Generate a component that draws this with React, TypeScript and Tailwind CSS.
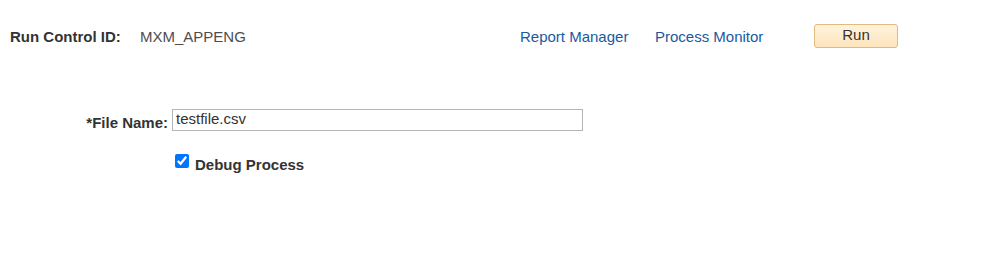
const font = 'font-["Liberation_Sans",Arial,sans-serif]';

export default function App() {
  return (
    <div className={`w-[988px] h-[258px] overflow-hidden bg-white pt-[24px] ${font} text-[15px] text-[#333333]`}>
      <div className="flex items-center h-[24px] pl-[10px]">
        <div className="w-[130px] font-bold pt-[2px]">Run Control ID:</div>
        <div className="w-[380px] pt-[2px] text-[#4d4d4d]">MXM_APPENG</div>
        <a href="#" className="w-[135px] pt-[2px] text-[#1a5a9e]">Report Manager</a>
        <a href="#" className="w-[159px] pt-[2px] text-[#1a5a9e]">Process Monitor</a>
        <button className="w-[84px] h-[24px] pb-[3px] rounded-[3px] border border-[#e3b883] bg-gradient-to-b from-[#fff3dc] to-[#fde4bd] text-[#333333] leading-none">
          Run
        </button>
      </div>

      <div className="flex items-end mt-[61px]">
        <label className="w-[168px] text-right font-bold leading-[18px] mb-[-1px]">*File Name:</label>
        <input
          className="ml-[4px] w-[411px] h-[22px] border border-[#b5b5b5] px-[3px] pb-[2px] text-[15px] text-[#333333] outline-none"
          defaultValue="testfile.csv"
        />
      </div>

      <div className="flex items-start mt-[23px] pl-[175px]">
        <input type="checkbox" defaultChecked className="m-0 w-[14px] h-[14px]" />
        <span className="ml-[6px] font-bold leading-[18px] mt-[2px]">Debug Process</span>
      </div>
    </div>
  );
}
